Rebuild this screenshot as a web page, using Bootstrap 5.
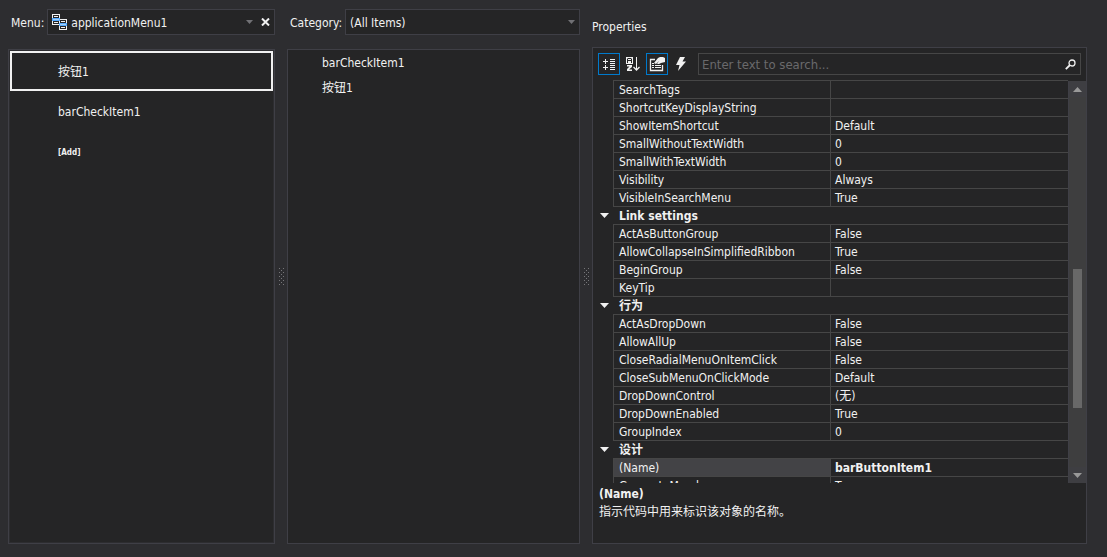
<!DOCTYPE html>
<html lang="en" data-bs-theme="dark">
<head>
<meta charset="utf-8">
<meta name="viewport" content="width=device-width, initial-scale=1">
<title>Application menu editor</title>
<link href="https://cdn.jsdelivr.net/npm/bootstrap@5.3.0/dist/css/bootstrap.min.css" rel="stylesheet">
<style>
  :root { --ink: #f1f1f1; --line: #3f3f46; --grid-line: #464646; --pane: #252526; --accent: #007acc; }
  body { background: #2d2d30; color: var(--ink); font: 12px/17px "DejaVu Sans Condensed", "Noto Sans CJK SC", sans-serif; }
  button { color: inherit; font: inherit; }
  .editor { display: grid; grid-template-columns: minmax(0, 267fr) 12px minmax(0, 293fr) 12px minmax(0, 495fr); padding: 9px 20px 13px 8px; min-height: 460px; }
  .pane { background: var(--pane); border: 1px solid var(--line); min-height: 0; }
  .menu-list { padding: 1px; box-shadow: inset 0 0 0 1px #2d2d30; }
  .top-row { height: 26px; margin-bottom: 14px; }
  .top-row label { padding: 2px 3px 0; }
  .picker { height: 26px; background: var(--pane); border: 1px solid var(--line); }
  .picker .form-select { --bs-form-select-bg-img: url("data:image/svg+xml,%3csvg xmlns='http://www.w3.org/2000/svg' viewBox='0 0 7 4'%3e%3cpath fill='%23717175' d='M0 0h7L3.500 4z'/%3e%3c/svg%3e");
    background-color: transparent; background-size: 7px 4px; background-position: right 4px center; color: var(--ink);
    border: 0; border-radius: 0; font: inherit; padding: 2px 16px 0 4px; box-shadow: none; height: 24px; }
  .menu-item { height: 40px; padding: 2px 0 0 46px; border: 2px solid transparent; background: none; }
  .menu-item.selected { border-color: var(--ink); }
  .add-item { font-size: 8px; font-weight: bold; }
  .pool-item { height: 25px; padding: 1px 0 0 34px; border: 0; background: none; }
  .tools { padding: 5px; }
  .tool-set { gap: 2px; margin-right: 6px; }
  .tool { width: 22px; height: 22px; border: 1px solid transparent; background: none; }
  .tool.on { border-color: var(--accent); }
  .search-box { height: 22px; border: 1px solid var(--grid-line); }
  .search-box input { background: none; border: 0; outline: 0; color: var(--ink); padding: 0 3px; font: inherit; font-size: 13px; }
  .search-box input::placeholder { color: #6a6a6c; opacity: 1; }
  .caption { height: 38px; padding-top: 10px; }
  .grid-view { flex: 1 1 0; min-height: 0; }
  .props { table-layout: fixed; border-collapse: separate; border-spacing: 0; width: 100%; }
  .props td, .props th { height: 18px; padding: 2px 4px 0 5px; line-height: 15px; white-space: nowrap; overflow: hidden; border-top: 1px solid var(--grid-line); font-weight: normal; }
  .props tbody td, .props tbody th.prop { border-left: 1px solid var(--grid-line); }
  .props tbody .gutter { border: 0; padding: 0; }
  .props th.group { font-weight: bold; padding-left: 6px; }
  .props td { padding-left: 4px; }
  .props td.own { font-weight: bold; }
  .props tr.current th { background: #434346; }
  .gutter button { width: 20px; height: 17px; padding: 0 0 0 2px; border: 0; background: none; }
  .scroll { width: 18px; background: #3e3e3f; margin-top: 1px; border-left: 1px solid #3f3f46; }
  .scroll button { height: 16px; border: 0; background: #3e3e42; }
  .thumb { width: 9px; background: #686868; }
  .note { height: 60px; padding: 2px 6px; line-height: 18px; }
</style>
</head>
<body>
<main class="editor vh-100">
  <section class="d-flex flex-column">
    <div class="top-row d-flex align-items-center">
      <label for="menu">Menu:</label>
      <div class="picker d-flex align-items-center flex-grow-1">
        <svg class="flex-shrink-0 ms-1" width="15" height="16" viewBox="0 0 15 16" shape-rendering="crispEdges" aria-hidden="true">
          <path d="M0 0h8v11H0zM7 5h8v11H7z" fill="#f1f1f1"/>
          <path d="M1 1h6v9H1zM8 6h6v9H8z" fill="#252526"/>
          <path d="M2 2h4v1H2zM2 8h4v1H2zM9 7h4v1H9zM9 13h4v1H9z" fill="#f1f1f1"/>
          <path d="M0 4h8v3H0zM7 9h8v3H7z" fill="#55aaff"/>
          <path d="M1 5h6v1H1zM8 10h6v1H8z" fill="#a5d0f5"/>
        </svg>
        <select id="menu" class="form-select"><option>applicationMenu1</option></select>
        <button class="border-0 bg-transparent p-0 mx-1" aria-label="Clear menu"><svg class="d-block" width="9" height="8" viewBox="0 0 9 8"><path d="M1 .5l7 7M8 .5l-7 7" stroke="#f1f1f1" stroke-width="2"/></svg></button>
      </div>
    </div>
    <div class="pane menu-list flex-grow-1 d-flex flex-column">
      <button class="menu-item selected text-start">按钮1</button>
      <button class="menu-item text-start">barCheckItem1</button>
      <button class="menu-item add-item text-start">[Add]</button>
    </div>
  </section>
  <div class="d-flex align-items-center justify-content-center"><svg width="5" height="17" viewBox="0 0 5 17" fill="#77777a" shape-rendering="crispEdges" aria-hidden="true"><path id="grip" d="M0 0h1v1H0zM4 0h1v1H4zM2 2h1v1H2zM0 4h1v1H0zM4 4h1v1H4zM2 6h1v1H2zM0 8h1v1H0zM4 8h1v1H4zM2 10h1v1H2zM0 12h1v1H0zM4 12h1v1H4zM2 14h1v1H2zM0 16h1v1H0zM4 16h1v1H4z"/></svg></div>
  <section class="d-flex flex-column">
    <div class="top-row d-flex align-items-center">
      <label for="category">Category:</label>
      <div class="picker flex-grow-1">
        <select id="category" class="form-select"><option>(All Items)</option></select>
      </div>
    </div>
    <div class="pane flex-grow-1 d-flex flex-column">
      <button class="pool-item text-start">barCheckItem1</button>
      <button class="pool-item text-start">按钮1</button>
    </div>
  </section>
  <div class="d-flex align-items-center justify-content-center"><svg width="5" height="17" viewBox="0 0 5 17" fill="#77777a" shape-rendering="crispEdges" aria-hidden="true"><use href="#grip"/></svg></div>
  <section class="d-flex flex-column">
    <div class="caption">Properties</div>
    <div class="pane flex-grow-1 d-flex flex-column">
      <div class="tools d-flex">
        <div class="tool-set d-flex">
          <button class="tool on p-0" aria-label="Categorized"><svg class="d-block m-auto" width="14" height="14" viewBox="0 0 14 14" fill="#f1f1f1" shape-rendering="crispEdges"><path d="M1 4h5v1H1zM3 2h1v5H3zM1 10h5v1H1zM3 8h1v5H3zM8 2h5v1H8zM8 4h5v1H8zM8 6h5v1H8zM8 8h5v1H8zM8 10h5v1H8zM8 12h5v1H8z"/></svg></button>
          <button class="tool p-0" aria-label="Alphabetical"><svg class="d-block m-auto" width="14" height="14" viewBox="0 0 14 14" fill="#f1f1f1"><path fill-rule="evenodd" d="M0 0h7v7H0zM1 6h1V4h3v2h1V2L5 1H2L1 2zM2 2h3v1H2z"/><path d="M1 8h5v2L3 12.500h3V14H1v-2l2.500-2.500H1zM10 0h1v13h-1z"/><path d="M7.500 10l3 3 3-3" fill="none" stroke="#f1f1f1" stroke-width="1.300"/></svg></button>
          <button class="tool on p-0" aria-label="Properties"><svg class="d-block m-auto" width="16" height="16" viewBox="0 0 16 16" fill="#f1f1f1"><path d="M6 3.500H1.500v11h12V9" fill="none" stroke="#f1f1f1" stroke-width="1.300"/><path d="M3 7h2v1H3zM3 9h2v1H3zM3 11h2v1H3zM6 9h6v1H6zM6 11h6v1H6zM5 7l4-5 2-1h3l2 1v4l-4 1-2 1H8l2-3-3 3z"/></svg></button>
          <button class="tool p-0" aria-label="Events"><svg class="d-block m-auto" width="12" height="14" viewBox="0 0 12 14" fill="#f1f1f1"><path d="M5 0h5L7.500 4.500H11L3 14l1.500-6H1z"/></svg></button>
        </div>
        <div class="search-box flex-grow-1 d-flex align-items-center">
          <input type="text" class="flex-grow-1" aria-label="Search properties" placeholder="Enter text to search...">
          <svg class="flex-shrink-0 me-1" width="11" height="11" viewBox="0 0 11 11" fill="none" stroke="#f1f1f1" aria-hidden="true"><circle cx="7" cy="4" r="3" stroke-width="1.300"/><path d="M5 6L.8 10.200" stroke-width="1.800"/></svg>
        </div>
      </div>
      <div class="grid-view d-flex overflow-hidden">
        <div class="flex-grow-1 overflow-hidden">
          <table class="props">
            <colgroup><col style="width:20px"><col style="width:217px"><col></colgroup>
            <tbody>
              <tr><td class="gutter"></td><th class="prop" scope="row">SearchTags</th><td></td></tr>
              <tr><td class="gutter"></td><th class="prop" scope="row">ShortcutKeyDisplayString</th><td></td></tr>
              <tr><td class="gutter"></td><th class="prop" scope="row">ShowItemShortcut</th><td>Default</td></tr>
              <tr><td class="gutter"></td><th class="prop" scope="row">SmallWithoutTextWidth</th><td>0</td></tr>
              <tr><td class="gutter"></td><th class="prop" scope="row">SmallWithTextWidth</th><td>0</td></tr>
              <tr><td class="gutter"></td><th class="prop" scope="row">Visibility</th><td>Always</td></tr>
              <tr><td class="gutter"></td><th class="prop" scope="row">VisibleInSearchMenu</th><td>True</td></tr>
            </tbody>
            <tbody>
              <tr><td class="gutter"><button class="d-block" aria-label="Collapse group"><svg class="d-block m-auto" width="9" height="5" viewBox="0 0 9 5" fill="#f1f1f1"><path d="M0 0h9L4.500 5z"/></svg></button></td><th class="group" colspan="2">Link settings</th></tr>
              <tr><td class="gutter"></td><th class="prop" scope="row">ActAsButtonGroup</th><td>False</td></tr>
              <tr><td class="gutter"></td><th class="prop" scope="row">AllowCollapseInSimplifiedRibbon</th><td>True</td></tr>
              <tr><td class="gutter"></td><th class="prop" scope="row">BeginGroup</th><td>False</td></tr>
              <tr><td class="gutter"></td><th class="prop" scope="row">KeyTip</th><td></td></tr>
            </tbody>
            <tbody>
              <tr><td class="gutter"><button class="d-block" aria-label="Collapse group"><svg class="d-block m-auto" width="9" height="5" viewBox="0 0 9 5" fill="#f1f1f1"><path d="M0 0h9L4.500 5z"/></svg></button></td><th class="group" colspan="2">行为</th></tr>
              <tr><td class="gutter"></td><th class="prop" scope="row">ActAsDropDown</th><td>False</td></tr>
              <tr><td class="gutter"></td><th class="prop" scope="row">AllowAllUp</th><td>False</td></tr>
              <tr><td class="gutter"></td><th class="prop" scope="row">CloseRadialMenuOnItemClick</th><td>False</td></tr>
              <tr><td class="gutter"></td><th class="prop" scope="row">CloseSubMenuOnClickMode</th><td>Default</td></tr>
              <tr><td class="gutter"></td><th class="prop" scope="row">DropDownControl</th><td>(无)</td></tr>
              <tr><td class="gutter"></td><th class="prop" scope="row">DropDownEnabled</th><td>True</td></tr>
              <tr><td class="gutter"></td><th class="prop" scope="row">GroupIndex</th><td>0</td></tr>
            </tbody>
            <tbody>
              <tr><td class="gutter"><button class="d-block" aria-label="Collapse group"><svg class="d-block m-auto" width="9" height="5" viewBox="0 0 9 5" fill="#f1f1f1"><path d="M0 0h9L4.500 5z"/></svg></button></td><th class="group" colspan="2">设计</th></tr>
              <tr class="current"><td class="gutter"></td><th class="prop" scope="row">(Name)</th><td class="own">barButtonItem1</td></tr>
              <tr><td class="gutter"></td><th class="prop" scope="row">GenerateMember</th><td>True</td></tr>
            </tbody>
          </table>
        </div>
        <div class="scroll flex-shrink-0 d-flex flex-column">
          <button class="p-0" aria-label="Scroll up"><svg class="d-block m-auto" width="9" height="5" viewBox="0 0 9 5" fill="#999"><path d="M0 5h9L4.500 0z"/></svg></button>
          <div class="flex-grow-1 d-flex flex-column align-items-center"><div style="flex:172 0 0"></div><div class="thumb" style="flex:139 0 0"></div><div style="flex:59 0 0"></div></div>
          <button class="p-0" aria-label="Scroll down"><svg class="d-block m-auto" width="9" height="5" viewBox="0 0 9 5" fill="#999"><path d="M0 0h9L4.500 5z"/></svg></button>
        </div>
      </div>
      <div class="note"><div class="fw-bold">(Name)</div><div>指示代码中用来标识该对象的名称。</div></div>
    </div>
  </section>
</main>
<script src="https://cdn.jsdelivr.net/npm/bootstrap@5.3.0/dist/js/bootstrap.bundle.min.js"></script>
</body>
</html>
